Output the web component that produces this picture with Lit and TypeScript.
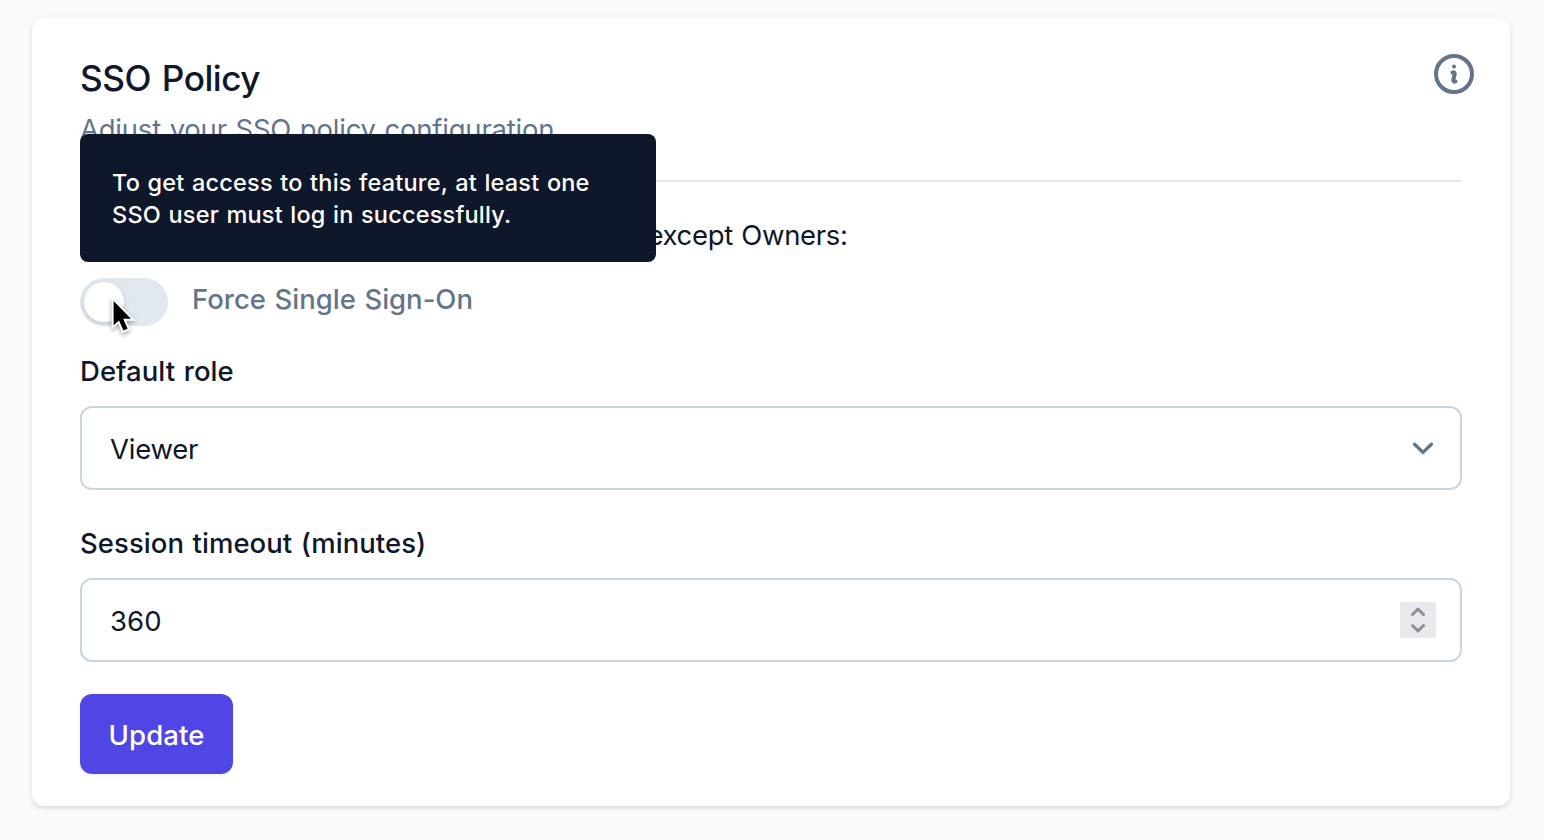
import { LitElement, html, css } from "lit";
import { customElement } from "lit/decorators.js";

@customElement("app-root")
export class AppRoot extends LitElement {
  static styles = css`
    :host {
      display: block;
      box-sizing: border-box;
      height: 840px;
      padding: 18px 34px 34px 32px;
      background: #f8fafc;
      color: #0f172a;
      font: 400 27.5px/40px Inter, sans-serif;
      letter-spacing: -0.22px;
      word-spacing: 1.2px;
    }
    .card {
      box-sizing: border-box;
      height: 788px;
      padding: 36px 48px 32px;
      border-radius: 12px;
      background: #fff;
      box-shadow: 0 2px 6px rgba(0, 0, 0, 0.1), 0 2px 4px -2px rgba(0, 0, 0, 0.1);
      display: flex;
      flex-direction: column;
    }
    .head {
      display: flex;
      justify-content: space-between;
      height: 126px;
      box-sizing: border-box;
    }
    .title {
      margin: 0;
      font-size: 35.2px;
      line-height: 48px;
      font-weight: 500;
      letter-spacing: -0.5px;
      word-spacing: 2px;
    }
    .sub {
      margin: 7px 0 0;
      color: #64748b;
    }
    .info {
      width: 48px;
      height: 48px;
      margin: -4px -16px 0 0;
    }
    .rule {
      height: 2px;
      background: #e2e8f0;
    }
    .note {
      margin: 33px 0 0 567.5px;
      letter-spacing: -0.35px;
    }
    .switch-row {
      position: relative;
      display: flex;
      align-items: flex-start;
      gap: 24px;
      margin-top: 23px;
      height: 48px;
    }
    .switch {
      box-sizing: border-box;
      width: 88px;
      height: 48px;
      padding: 4px;
      border-radius: 24px;
      background: #e2e8f0;
    }
    .knob {
      width: 40px;
      height: 40px;
      border-radius: 50%;
      background: #fff;
      box-shadow: 0 2px 6px rgba(0, 0, 0, 0.1), 0 2px 4px -2px rgba(0, 0, 0, 0.1);
    }
    .switch-label {
      margin-top: 1px;
      color: #64748b;
      font-weight: 500;
      letter-spacing: 0;
    }
    .tooltip {
      position: absolute;
      left: 0;
      bottom: 64px;
      box-sizing: border-box;
      width: 576px;
      height: 128px;
      padding: 33px 32px 31px;
      border-radius: 8px;
      background: #0f172a;
      color: #fff;
      font-size: 23.5px;
      line-height: 32px;
      font-weight: 500;
      letter-spacing: 0.2px;
      word-spacing: 1px;
    }
    .cursor {
      position: absolute;
      left: 26px;
      top: 16px;
      width: 34px;
      height: 44px;
      filter: drop-shadow(0 2px 2px rgba(0, 0, 0, 0.35));
    }
    .label {
      margin-top: 25px;
      font-weight: 500;
      letter-spacing: 0.05px;
    }
    .label.second {
      margin-top: 33px;
    }
    .field {
      box-sizing: border-box;
      height: 84px;
      margin-top: 15px;
      padding: 1px 24px 0 28px;
      border: 2px solid #cbd5e1;
      border-radius: 12px;
      display: flex;
      align-items: center;
      justify-content: space-between;
    }
    .value.number {
      letter-spacing: 0.1px;
    }
    .chevron {
      width: 28px;
      height: 28px;
      margin: -2px -1px 0 0;
    }
    .stepper {
      width: 36px;
      height: 36px;
      margin-top: -1px;
      background: #e9e8ed;
    }
    .button {
      align-self: flex-start;
      box-sizing: border-box;
      width: 153px;
      height: 80px;
      margin-top: 32px;
      padding: 1px 0 0;
      border: 0;
      border-radius: 12px;
      background: #4f46e5;
      color: #fff;
      font: inherit;
      font-weight: 500;
      letter-spacing: 0.1px;
      box-shadow: 0 2px 4px rgba(0, 0, 0, 0.05);
    }
  `;

  render() {
    return html`
      <section class="card">
        <header class="head">
          <div>
            <h3 class="title">SSO Policy</h3>
            <p class="sub">Adjust your SSO policy configuration.</p>
          </div>
          <svg class="info" viewBox="0 0 24 24" fill="none" stroke="#64748b" stroke-width="2" stroke-linecap="round" stroke-linejoin="round">
            <path d="m11.25 11.25.041-.02a.75.75 0 0 1 1.063.852l-.708 2.836a.75.75 0 0 0 1.063.853l.041-.021M21 12a9 9 0 1 1-18 0 9 9 0 0 1 18 0Zm-9-3.75h.008v.008H12V8.25Z" />
          </svg>
        </header>
        <div class="rule"></div>
        <p class="note">except Owners:</p>
        <div class="switch-row">
          <div class="switch" role="switch" aria-checked="false"><div class="knob"></div></div>
          <span class="switch-label">Force Single Sign-On</span>
          <div class="tooltip" role="tooltip">To get access to this feature, at least one SSO user must log in successfully.</div>
          <svg class="cursor" viewBox="0 0 34 44">
            <path d="M7.6 7V31.2L13 26.4L17.4 36.6L21.6 34.8L17.2 24.8H25Z" fill="#000" stroke="#fff" stroke-width="4" paint-order="stroke" />
          </svg>
        </div>
        <div class="label">Default role</div>
        <div class="field">
          <span class="value">Viewer</span>
          <svg class="chevron" viewBox="0 0 28 28" fill="none" stroke="#64748b" stroke-width="3.4" stroke-linecap="round" stroke-linejoin="round">
            <path d="M5.6 10.2L14 18.4L22.4 10.2" />
          </svg>
        </div>
        <div class="label second">Session timeout (minutes)</div>
        <div class="field">
          <span class="value number">360</span>
          <svg class="stepper" viewBox="0 0 36 36" fill="none" stroke="#908e9b" stroke-width="3" stroke-linecap="round" stroke-linejoin="round">
            <path d="M12.5 12.5L18 7.2L23.5 12.5M12.5 23.5L18 28.8L23.5 23.5" />
          </svg>
        </div>
        <button class="button">Update</button>
      </section>
    `;
  }
}
